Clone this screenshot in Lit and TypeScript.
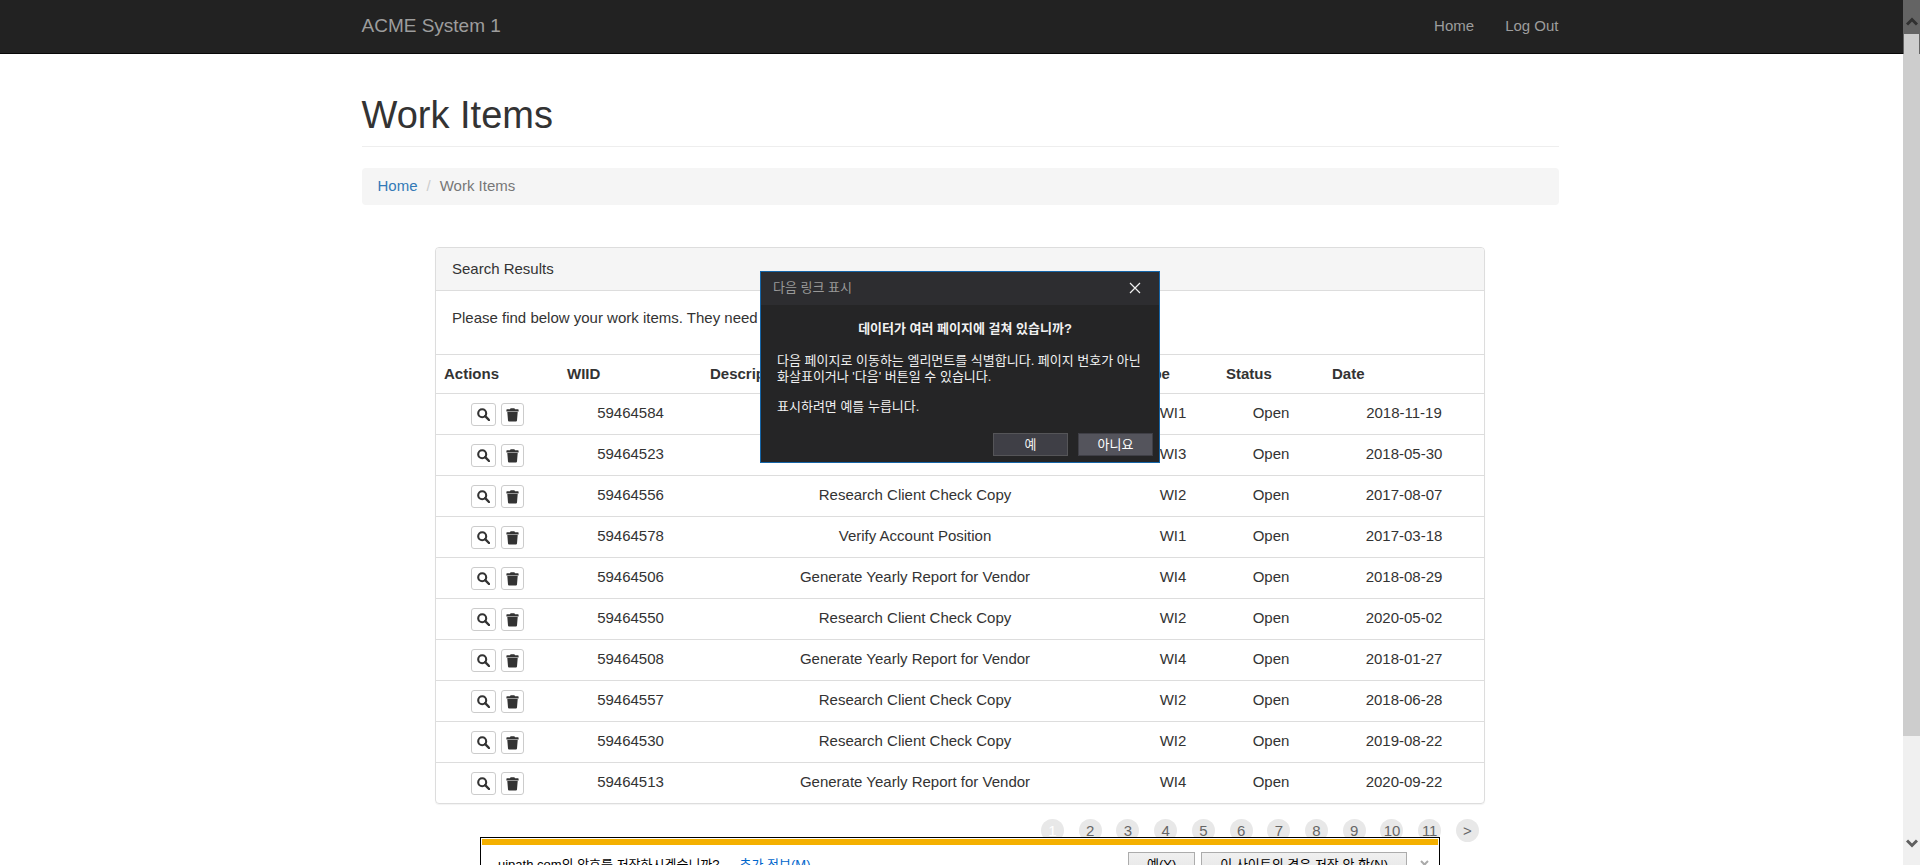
import { LitElement, html, css } from "lit";
import { customElement } from "lit/decorators.js";

interface WorkItem {
  id: string;
  description: string;
  type: string;
  status: string;
  date: string;
}

const ITEMS: WorkItem[] = [
  ["59464584", "Research Client Check Copy", "WI1", "2018-11-19"],
  ["59464523", "Research Client Check Copy", "WI3", "2018-05-30"],
  ["59464556", "Research Client Check Copy", "WI2", "2017-08-07"],
  ["59464578", "Verify Account Position", "WI1", "2017-03-18"],
  ["59464506", "Generate Yearly Report for Vendor", "WI4", "2018-08-29"],
  ["59464550", "Research Client Check Copy", "WI2", "2020-05-02"],
  ["59464508", "Generate Yearly Report for Vendor", "WI4", "2018-01-27"],
  ["59464557", "Research Client Check Copy", "WI2", "2018-06-28"],
  ["59464530", "Research Client Check Copy", "WI2", "2019-08-22"],
  ["59464513", "Generate Yearly Report for Vendor", "WI4", "2020-09-22"],
].map(([id, description, type, date]) => ({ id, description, type, status: "Open", date }));

const PAGES = ["1", "2", "3", "4", "5", "6", "7", "8", "9", "10", "11"];

const searchIcon = html`<svg width="13" height="13" viewBox="0 0 13 13" aria-hidden="true">
  <circle cx="5.2" cy="5.2" r="4" fill="none" stroke="#333" stroke-width="2.1"></circle>
  <path d="M8.2 8.2 L12 12" stroke="#333" stroke-width="2.4" stroke-linecap="round"></path>
</svg>`;

const trashIcon = html`<svg width="13" height="14" viewBox="0 0 13 14" aria-hidden="true">
  <path
    fill="#333"
    d="M4 1.2 Q4.2 .3 5 .3 H8 Q8.8 .3 9 1.2 H12 Q12.6 1.3 12.6 2 V3.4 H.4 V2 Q.4 1.3 1 1.2Z M1.3 3.9 H11.7 L11 12.6 Q10.9 13.5 10 13.5 H3 Q2.1 13.5 2 12.6Z"
  ></path>
</svg>`;

/** Dark prompt that floats over the page. */
@customElement("next-link-dialog")
class NextLinkDialog extends LitElement {
  static styles = css`
    :host {
      display: block;
      box-sizing: border-box;
      width: 400px;
      border: 1px solid #1565a7;
      background: #252526;
      color: #f1f1f1;
      font: 13px/16px "Liberation Sans", "Noto Sans CJK KR", sans-serif;
    }
    .title {
      display: flex;
      align-items: center;
      justify-content: space-between;
      height: 31px;
      padding: 0 18px 2px 12px;
      background: #2d2d30;
      color: #999;
    }
    .close {
      display: flex;
      padding: 0;
      border: 0;
      background: none;
    }
    .body {
      padding: 16px 16px 0;
    }
    h2 {
      margin: 0 0 16px;
      padding-left: 10px;
      font-size: 13px;
      line-height: 16px;
      text-align: center;
    }
    p {
      margin: 0 0 14px;
      white-space: nowrap;
    }
    .actions {
      display: flex;
      justify-content: flex-end;
      gap: 10px;
      padding: 4px 6px 6px;
    }
    .actions button {
      width: 75px;
      height: 23px;
      padding: 0;
      border: 1px solid #555558;
      background: #3f3f46;
      color: #f1f1f1;
      font: inherit;
    }
    .actions .focused {
      border-color: #3f3f46;
      background: #54545c;
      color: #fff;
    }
  `;

  render() {
    return html`
      <div class="title">
        <span>다음 링크 표시</span>
        <button class="close" aria-label="닫기">
          <svg width="12" height="12" viewBox="0 0 12 12" aria-hidden="true">
            <path d="M1 1 L11 11 M11 1 L1 11" stroke="#f1f1f1" stroke-width="1.2"></path>
          </svg>
        </button>
      </div>
      <div class="body">
        <h2>데이터가 여러 페이지에 걸쳐 있습니까?</h2>
        <p>
          다음 페이지로 이동하는 엘리먼트를 식별합니다. 페이지 번호가 아닌<br />화살표이거나 '다음' 버튼일 수 있습니다.
        </p>
        <p>표시하려면 예를 누릅니다.</p>
      </div>
      <div class="actions">
        <button>예</button>
        <button class="focused">아니요</button>
      </div>
    `;
  }
}

/** Browser bar offering to store the password. */
@customElement("password-bar")
class PasswordBar extends LitElement {
  static styles = css`
    :host {
      display: block;
      box-sizing: border-box;
      padding: 1px;
      border: 1px solid #000;
      background: #fff;
      color: #000;
      font: 13px/20px "Liberation Sans", "Noto Sans CJK KR", sans-serif;
    }
    .stripe {
      height: 6px;
      background: #f4b000;
    }
    .row {
      display: flex;
      align-items: center;
      gap: 6px;
      padding: 7px 9px 7px 16px;
      white-space: nowrap;
    }
    .more {
      margin: 0 auto 0 14px;
      color: #0066cc;
      text-decoration: none;
    }
    .choice {
      min-width: 65px;
      height: 25px;
      padding: 0 18px;
      border: 1px solid #acacac;
      background: linear-gradient(#f0f0f0, #e5e5e5);
      color: #000;
      font: inherit;
    }
    .choice.never {
      min-width: 202px;
    }
    .close {
      display: flex;
      padding: 0;
      margin-left: 7px;
      border: 0;
      background: none;
    }
  `;

  render() {
    return html`
      <div class="stripe"></div>
      <div class="row">
        <span>uipath.com의 암호를 저장하시겠습니까?</span>
        <a class="more" href="#">추가 정보(M)</a>
        <button class="choice">예(Y)</button>
        <button class="choice never">이 사이트의 경우 저장 안 함(N)</button>
        <button class="close" aria-label="닫기">
          <svg width="9" height="9" viewBox="0 0 9 9" aria-hidden="true">
            <path d="M1 1 L8 8 M8 1 L1 8" stroke="#aaa" stroke-width="2"></path>
          </svg>
        </button>
      </div>
    `;
  }
}

@customElement("app-root")
class AppRoot extends LitElement {
  static styles = css`
    :host {
      display: block;
      position: relative;
      height: 100vh;
      overflow: hidden;
      background: #fff;
      color: #333;
      font: 15px/22px "Liberation Sans", Arial, sans-serif;
    }
    a {
      color: #337ab7;
      text-decoration: none;
    }
    .container {
      max-width: 1197px;
      margin: 0 auto;
    }
    .navbar {
      border-bottom: 1px solid #080808;
      background: #222;
    }
    .navbar a {
      color: #9d9d9d;
    }
    .navbar .container {
      display: flex;
      align-items: center;
      gap: 31px;
      height: 51px;
      padding-bottom: 2px;
    }
    .navbar .brand {
      margin-right: auto;
      font-size: 19px;
    }
    h1 {
      margin: 40px 0 21px;
      padding-bottom: 10px;
      border-bottom: 1px solid #eee;
      font-size: 38px;
      line-height: 42px;
      font-weight: 400;
    }
    .breadcrumb {
      display: flex;
      gap: 9px;
      margin: 0 0 42px;
      padding: 7px 16px 8px;
      border-radius: 4px;
      background: #f5f5f5;
      list-style: none;
    }
    .separator {
      color: #ccc;
    }
    .current {
      color: #777;
    }
    .results {
      max-width: 1050px;
      margin: 0 auto;
    }
    .panel {
      border: 1px solid #ddd;
      border-radius: 4px;
      box-shadow: 0 1px 1px rgba(0, 0, 0, 0.05);
    }
    h2 {
      margin: 0;
      padding: 10px 16px;
      border-bottom: 1px solid #ddd;
      border-radius: 3px 3px 0 0;
      background: #f5f5f5;
      font-size: 15px;
      line-height: 22px;
      font-weight: 400;
    }
    .intro {
      margin: 0;
      padding: 16px 16px 25px;
    }
    table {
      width: 100%;
      border-collapse: separate;
      border-spacing: 0;
      table-layout: fixed;
    }
    .col-actions {
      width: 123px;
    }
    .col-id {
      width: 143px;
    }
    .col-type {
      width: 90px;
    }
    .col-status {
      width: 106px;
    }
    .col-date {
      width: 160px;
    }
    th,
    td {
      padding: 8px;
      border-top: 1px solid #ddd;
      vertical-align: top;
    }
    th {
      text-align: left;
    }
    td {
      text-align: center;
    }
    .tools {
      display: flex;
      justify-content: center;
      gap: 5px;
      padding-top: 1px;
    }
    .tool {
      display: flex;
      align-items: center;
      justify-content: center;
      height: 23px;
      padding: 0 5px;
      border: 1px solid #ccc;
      border-radius: 3px;
      background: #fff;
    }
    .tool.delete {
      padding: 0 4px;
    }
    .pages {
      display: flex;
      justify-content: space-between;
      max-width: 438px;
      margin: 15px 6px 0 auto;
      padding: 0;
      list-style: none;
    }
    .page {
      display: block;
      width: 23px;
      border-radius: 50%;
      background: #e8e8e8;
      color: #666;
      line-height: 23px;
      text-align: center;
    }
    .page.active {
      color: #fff;
    }
    .overlay-dialog {
      position: absolute;
      top: 271px;
      left: calc(50% - 200px);
    }
    .overlay-bar {
      position: absolute;
      top: 837px;
      left: 25%;
      width: 50%;
    }
    .scrollbar {
      position: absolute;
      top: 0;
      right: 0;
      bottom: 0;
      display: flex;
      flex-direction: column;
      width: 17px;
      background: linear-gradient(#646464 54px, #f0f0f0 54px);
    }
    .arrow {
      display: flex;
      justify-content: center;
      height: 17px;
    }
    .arrow.up {
      padding-top: 17px;
    }
    .thumb {
      height: 702px;
      border: solid transparent;
      border-width: 0 1px;
      background: linear-gradient(#cdcdcd, #cdcdcd) padding-box,
        linear-gradient(transparent 20px, #cdcdcd 20px) border-box;
    }
    .arrow.down {
      margin-top: auto;
      height: 27px;
    }
  `;

  private renderRow(item: WorkItem) {
    return html`<tr>
      <td>
        <div class="tools">
          <button class="tool" aria-label="View ${item.id}">${searchIcon}</button>
          <button class="tool delete" aria-label="Delete ${item.id}">${trashIcon}</button>
        </div>
      </td>
      <td>${item.id}</td>
      <td>${item.description}</td>
      <td>${item.type}</td>
      <td>${item.status}</td>
      <td>${item.date}</td>
    </tr>`;
  }

  render() {
    return html`
      <nav class="navbar">
        <div class="container">
          <a class="brand" href="#">ACME System 1</a>
          <a href="#">Home</a>
          <a href="#">Log Out</a>
        </div>
      </nav>
      <main class="container">
        <h1>Work Items</h1>
        <ol class="breadcrumb">
          <li><a href="#">Home</a></li>
          <li class="separator" aria-hidden="true">/</li>
          <li class="current">Work Items</li>
        </ol>
        <section class="results">
          <div class="panel">
            <h2>Search Results</h2>
            <p class="intro">Please find below your work items. They need to be completed.</p>
            <table>
              <colgroup>
                <col class="col-actions" />
                <col class="col-id" />
                <col />
                <col class="col-type" />
                <col class="col-status" />
                <col class="col-date" />
              </colgroup>
              <thead>
                <tr>
                  <th>Actions</th>
                  <th>WIID</th>
                  <th>Description</th>
                  <th>Type</th>
                  <th>Status</th>
                  <th>Date</th>
                </tr>
              </thead>
              <tbody>
                ${ITEMS.map((item) => this.renderRow(item))}
              </tbody>
            </table>
          </div>
          <ul class="pages">
            ${PAGES.map(
              (page) => html`<li><a class="page ${page === "1" ? "active" : ""}" href="#">${page}</a></li>`,
            )}
            <li><a class="page" href="#">&gt;</a></li>
          </ul>
        </section>
      </main>
      <password-bar class="overlay-bar"></password-bar>
      <next-link-dialog class="overlay-dialog" role="dialog"></next-link-dialog>
      <div class="scrollbar" aria-hidden="true">
        <div class="arrow up">
          <svg width="12" height="10" viewBox="0 0 12 10">
            <path d="M1 7.5 L6 2.5 L11 7.5" fill="none" stroke="#303030" stroke-width="3"></path>
          </svg>
        </div>
        <div class="thumb"></div>
        <div class="arrow down">
          <svg width="12" height="10" viewBox="0 0 12 10">
            <path d="M1 2.5 L6 7.5 L11 2.5" fill="none" stroke="#606060" stroke-width="3"></path>
          </svg>
        </div>
      </div>
    `;
  }
}
